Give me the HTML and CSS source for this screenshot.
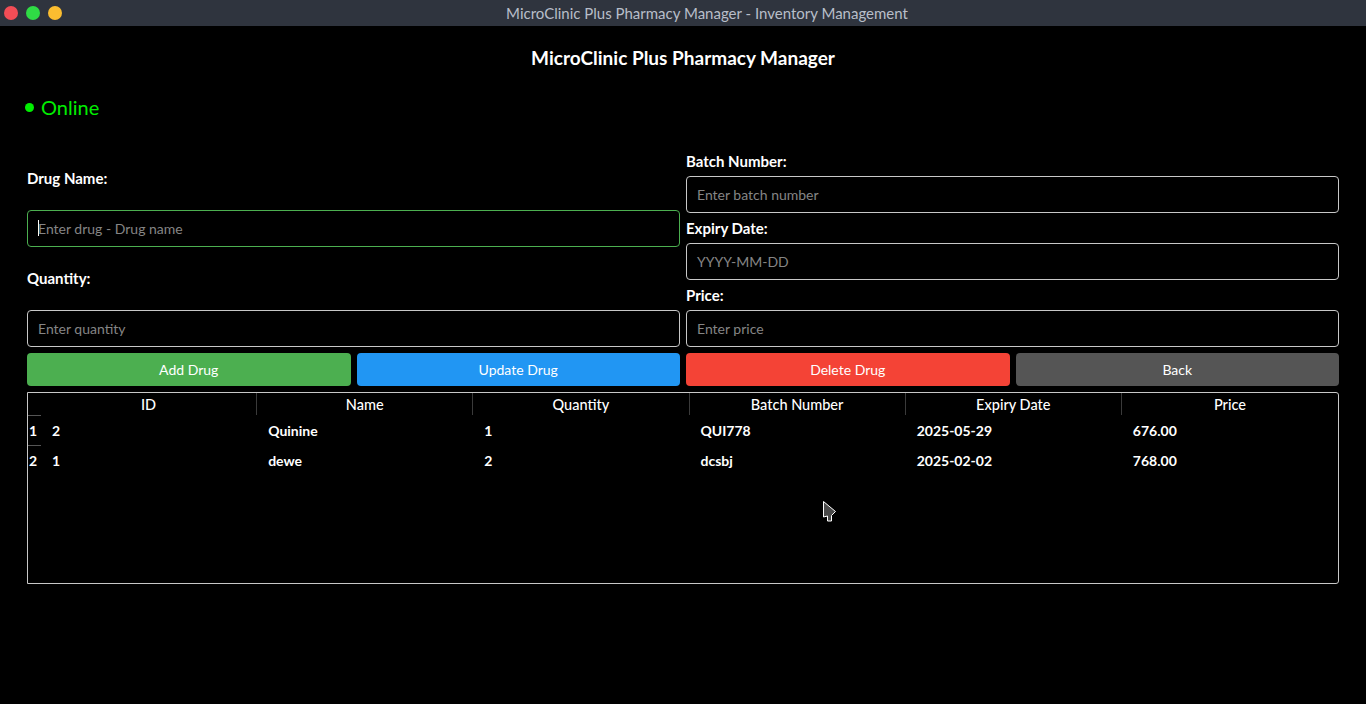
FILE: index.html
```html
<!DOCTYPE html>
<html>
<head>
<meta charset="utf-8">
<title>MicroClinic Plus Pharmacy Manager - Inventory Management</title>
<link rel="stylesheet" href="styles.css">
</head>
<body>
<header class="titlebar">
  <div class="lights">
    <span class="light red"></span>
    <span class="light green"></span>
    <span class="light yellow"></span>
  </div>
  <div class="wtitle">MicroClinic Plus Pharmacy Manager - Inventory Management</div>
</header>
<main class="app">
  <h1 class="heading">MicroClinic Plus Pharmacy Manager</h1>
  <div class="status"><span class="dot"></span>Online</div>

  <section class="form">
    <div class="col left">
      <div class="lbl stretch">Drug Name:</div>
      <div class="field focus"><span class="caret"></span><span class="ph">Enter drug - Drug name</span></div>
      <div class="lbl stretch">Quantity:</div>
      <div class="field"><span class="ph">Enter quantity</span></div>
    </div>
    <div class="col right">
      <div class="lbl">Batch Number:</div>
      <div class="field"><span class="ph">Enter batch number</span></div>
      <div class="lbl">Expiry Date:</div>
      <div class="field"><span class="ph">YYYY-MM-DD</span></div>
      <div class="lbl">Price:</div>
      <div class="field"><span class="ph">Enter price</span></div>
    </div>
  </section>

  <section class="buttons">
    <button class="btn add">Add Drug</button>
    <button class="btn update">Update Drug</button>
    <button class="btn delete">Delete Drug</button>
    <button class="btn back">Back</button>
  </section>

  <section class="table">
    <div class="trow thead">
      <div class="vh corner"></div>
      <div class="th">ID</div>
      <div class="th">Name</div>
      <div class="th">Quantity</div>
      <div class="th">Batch Number</div>
      <div class="th">Expiry Date</div>
      <div class="th last">Price</div>
    </div>
    <div class="trow">
      <div class="vh">1</div>
      <div class="td">2</div>
      <div class="td">Quinine</div>
      <div class="td">1</div>
      <div class="td">QUI778</div>
      <div class="td">2025-05-29</div>
      <div class="td">676.00</div>
    </div>
    <div class="trow">
      <div class="vh">2</div>
      <div class="td">1</div>
      <div class="td">dewe</div>
      <div class="td">2</div>
      <div class="td">dcsbj</div>
      <div class="td">2025-02-02</div>
      <div class="td">768.00</div>
    </div>
  </section>
</main>
<svg class="cursor" width="16" height="24" viewBox="0 0 16 24">
  <path d="M1.5 1.5 L1.5 17 L5.5 16 L5.5 21 L9.5 21 L9.5 15.5 L13.5 11.5 Z" fill="#4a4a4a" stroke="#ffffff" stroke-width="1" stroke-linejoin="round"/>
</svg>
</body>
</html>
```
FILE: styles.css
```css
* { box-sizing: border-box; }
html, body {
  margin: 0;
  padding: 0;
  background: #000;
  color: #fff;
  font-family: Lato, "Noto Sans", sans-serif;
  height: 100%;
  overflow: hidden;
}
.titlebar {
  height: 26px;
  background: #2f343e;
  position: relative;
  display: flex;
  align-items: center;
  justify-content: center;
  padding-left: 48px;
}
.lights {
  position: absolute;
  left: 4px;
  top: 6px;
  display: flex;
  gap: 8px;
}
.light {
  width: 14px;
  height: 14px;
  border-radius: 50%;
  display: block;
}
.light.red { background: #f24d56; }
.light.green { background: #2fdc45; }
.light.yellow { background: #fbbd30; }
.wtitle {
  color: #b8bec9;
  font-size: 15px;
  line-height: 26px;
}
.app {
  padding: 20px 27px 0 27px;
}
.heading {
  margin: 0;
  text-align: center;
  font-size: 19px;
  font-weight: 700;
  line-height: 24px;
}
.status {
  margin-top: 24px;
  height: 26px;
  display: flex;
  align-items: center;
  color: #00ee00;
  font-size: 20px;
  margin-left: -2px;
}
.dot {
  width: 9px;
  height: 9px;
  border-radius: 50%;
  background: #00ee00;
  margin-right: 7px;
}
.form {
  margin-top: 26px;
  display: grid;
  grid-template-columns: 1fr 1fr;
  gap: 6px;
  height: 201px;
}
.col {
  display: flex;
  flex-direction: column;
}
.lbl {
  height: 30px;
  display: flex;
  align-items: center;
  font-size: 15px;
  font-weight: 700;
}
.lbl.stretch { flex: 1; height: auto; }
.field {
  height: 37px;
  border: 1px solid #c8c8c8;
  border-radius: 4px;
  display: flex;
  align-items: center;
  padding-left: 10px;
  font-size: 14px;
  flex: none;
}
.field.focus { border-color: #4caf50; }
.ph { color: #858585; }
.caret {
  width: 1px;
  height: 16px;
  background: #fff;
  margin-right: -1px;
}
.buttons {
  margin-top: 6px;
  display: grid;
  grid-template-columns: repeat(4, 1fr);
  gap: 6px;
}
.btn {
  height: 33px;
  border: none;
  border-radius: 4px;
  color: #fff;
  font-family: inherit;
  font-size: 14px;
  padding: 0;
}
.btn.add { background: #4caf50; }
.btn.update { background: #2196f3; }
.btn.delete { background: #f44336; }
.btn.back { background: #555555; }
.table {
  margin-top: 6px;
  height: 192px;
  border: 1px solid #c8c8c8;
  border-radius: 0 3px 3px 0;
}
.trow {
  display: grid;
  grid-template-columns: 13px repeat(6, 1fr);
  height: 30px;
  align-items: center;
  font-size: 14px;
  font-weight: 700;
}
.trow.thead { height: 22px; align-items: stretch; }
.vh {
  height: 100%;
  display: flex;
  align-items: center;
  padding-left: 1px;
  border-top: 1px solid #555;
  font-weight: 700;
}
.vh.corner { border-top: none; }
.th {
  display: flex;
  align-items: center;
  justify-content: center;
  border-right: 1px solid #3a3a3a;
  font-weight: 500;
  font-size: 14.5px;
}
.th.last { border-right: none; }
.td { padding-left: 11px; }
.cursor {
  position: absolute;
  left: 822px;
  top: 500px;
}
```
